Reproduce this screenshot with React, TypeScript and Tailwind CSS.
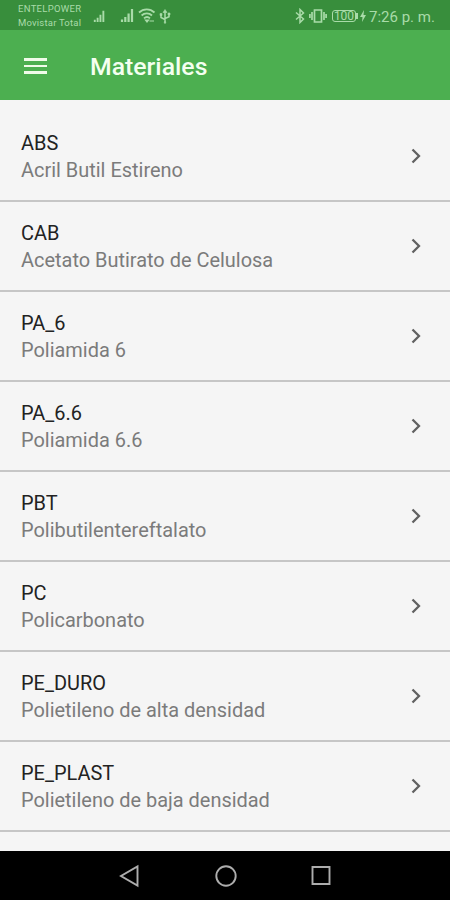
import React from "react";

const materials = [
  { code: "ABS", name: "Acril Butil Estireno" },
  { code: "CAB", name: "Acetato Butirato de Celulosa" },
  { code: "PA_6", name: "Poliamida 6" },
  { code: "PA_6.6", name: "Poliamida 6.6" },
  { code: "PBT", name: "Polibutilentereftalato" },
  { code: "PC", name: "Policarbonato" },
  { code: "PE_DURO", name: "Polietileno de alta densidad" },
  { code: "PE_PLAST", name: "Polietileno de baja densidad" },
];

const Signal = ({ className }: { className?: string }) => (
  <svg viewBox="0 0 14 14" className={className} stroke="currentColor" strokeWidth="2.2">
    <path d="M1.5 14v-2.5M4.800 14V9M8.100 14V5.500M11.500 14V1" />
  </svg>
);

const StatusBar = () => (
  <div className="flex h-[30px] shrink-0 bg-[#388e3c] text-[#a9dba9]">
    <div className="ml-[18px] w-[74px] pt-[2px] text-[9.5px] leading-[14px] whitespace-nowrap">
      <p className="tracking-[0.3px]">ENTELPOWER</p>
      <p className="tracking-[0.2px]">Movistar Total</p>
    </div>
    <Signal className="mt-[10px] h-[12px] w-[15px]" />
    <Signal className="mt-[8px] ml-[12px] h-[14px] w-[17px]" />
    <svg viewBox="0 0 18 16" className="mt-[8px] ml-[2px] h-[16px] w-[18px]" fill="none" stroke="currentColor" strokeWidth="1.8">
      <path d="M1 4.500C5.500.2 12 .2 16.500 4.500M3.600 7.500c3-2.800 7.400-2.800 10.400 0M6 10.300c1.800-1.600 4.200-1.600 6 0" />
      <path d="M7.500 12.200h3L9 14zM11.500 13h4.500" fill="currentColor" strokeWidth="1.200" />
    </svg>
    <svg viewBox="0 0 12 16" className="mt-[9px] ml-[3px] h-[16px] w-[12px]" fill="none" stroke="currentColor" strokeWidth="1.500">
      <path d="M6 2v11M2 5.500v3L6 10.500M10 4.500v3.300L6 9.500" />
      <path d="M6 .5 8 3.500H4zM1 4.500h2v2H1zM9 4h2v2H9zM5.300 12.800h1.400v1.400H5.300z" fill="currentColor" strokeWidth=".6" />
    </svg>
    <div className="flex-1" />
    <svg viewBox="0 0 10 16" className="mt-[8px] h-[16px] w-[10px]" fill="none" stroke="currentColor" strokeWidth="1.500">
      <path d="M1 4.500l7.500 6.500L5 14.500v-13L8.500 5 1 11.500" />
    </svg>
    <svg viewBox="0 0 18 16" className="mt-[8px] ml-[4px] h-[16px] w-[18px]" fill="none" stroke="currentColor" strokeWidth="1.700">
      <path d="M5.500 2h7v12h-7zM3 4v8M15 4v8M.9 6v4M17.100 6v4" />
    </svg>
    <div className="mt-[10px] ml-[5px] flex h-[12px] w-[24px] items-center justify-center rounded-[3px] border border-current text-[12px] leading-none">
      100
    </div>
    <div className="mt-[13px] h-[6px] w-[2px] bg-current" />
    <svg viewBox="0 0 6 12" className="mt-[10px] ml-[2px] h-[12px] w-[6px]" fill="currentColor">
      <path d="M4 0 0 7h2.500L2 12l4-7H3.500z" />
    </svg>
    <p className="mt-[7px] mr-[15px] ml-[3px] w-[66px] text-[15px] leading-[20px] whitespace-nowrap">7:26 p. m.</p>
  </div>
);

const App = () => {
  return (
    <div className="flex h-[900px] w-[450px] flex-col overflow-hidden bg-[#f5f5f5] font-['Roboto',sans-serif]">
      <StatusBar />
      <header className="flex h-[70px] shrink-0 items-center bg-[#4caf50]">
        <button className="mt-[2px] ml-[24px] flex w-[23px] flex-col gap-[4px]" aria-label="Menu">
          <span className="h-[2.5px] w-full bg-[#effbe9]" />
          <span className="h-[2.5px] w-full bg-[#effbe9]" />
          <span className="h-[2.5px] w-full bg-[#effbe9]" />
        </button>
        <h1 className="ml-[43px] pt-[4px] text-[24.8px] leading-[30px] font-medium text-[#f4fff0]">Materiales</h1>
      </header>
      <main className="flex-1 overflow-hidden pt-[12px]">
        {materials.map((item) => (
          <div
            key={item.code}
            className="flex h-[90px] items-center justify-between border-b-2 border-[#c6c6c6] pr-[29px] pl-[21px]"
          >
            <div className="pt-[2px] text-[19.95px] leading-[27px]">
              <p className="text-[#222]">{item.code}</p>
              <p className="text-[#7b7b7b]">{item.name}</p>
            </div>
            <svg viewBox="0 0 10 16" className="mb-[1px] h-[16px] w-[10px]" fill="none" stroke="#616161" strokeWidth="2.3">
              <path d="M1.500 1.500 8 8l-6.500 6.500" />
            </svg>
          </div>
        ))}
      </main>
      <nav className="flex h-[49px] shrink-0 items-center bg-black pl-[119px] text-[#adadad]">
        <svg viewBox="0 0 21 24" className="h-[24px] w-[21px]" fill="none" stroke="currentColor" strokeWidth="1.900">
          <path d="M18.500 2.500v19L2 12z" />
        </svg>
        <svg viewBox="0 0 24 24" className="ml-[73.500px] h-[24px] w-[24px]" fill="none" stroke="currentColor" strokeWidth="1.900">
          <circle cx="12" cy="12" r="9.700" />
        </svg>
        <svg viewBox="0 0 22 22" className="ml-[72px] h-[22px] w-[22px]" fill="none" stroke="currentColor" strokeWidth="1.900">
          <path d="M2.500 2h17v17h-17z" />
        </svg>
      </nav>
    </div>
  );
};

export default App;
